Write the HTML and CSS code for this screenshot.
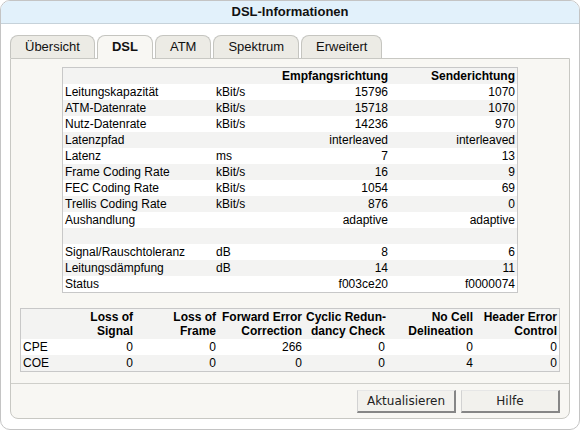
FILE: index.html
```html
<!DOCTYPE html>
<html lang="de">
<head>
    <meta charset="UTF-8">
    <title>DSL-Informationen</title>
    <link rel="stylesheet" href="styles.css">
</head>
<body>
    <div class="window">
        <div class="title">DSL-Informationen</div>
        <div class="window-body">
            <div class="tabs">
                <div class="tab">Übersicht</div>
                <div class="tab active">DSL</div>
                <div class="tab">ATM</div>
                <div class="tab">Spektrum</div>
                <div class="tab">Erweitert</div>
            </div>
            <div class="panel">
                <table class="dsl-table">
                    <colgroup>
                        <col class="col-name">
                        <col class="col-unit">
                        <col class="col-down">
                        <col class="col-up">
                    </colgroup>
                    <thead>
                        <tr><th></th><th></th><th class="num">Empfangsrichtung</th><th class="num">Senderichtung</th></tr>
                    </thead>
                    <tbody>
                        <tr><td>Leitungskapazität</td><td>kBit/s</td><td class="num">15796</td><td class="num">1070</td></tr>
                        <tr><td>ATM-Datenrate</td><td>kBit/s</td><td class="num">15718</td><td class="num">1070</td></tr>
                        <tr><td>Nutz-Datenrate</td><td>kBit/s</td><td class="num">14236</td><td class="num">970</td></tr>
                        <tr><td>Latenzpfad</td><td></td><td class="num">interleaved</td><td class="num">interleaved</td></tr>
                        <tr><td>Latenz</td><td>ms</td><td class="num">7</td><td class="num">13</td></tr>
                        <tr><td>Frame Coding Rate</td><td>kBit/s</td><td class="num">16</td><td class="num">9</td></tr>
                        <tr><td>FEC Coding Rate</td><td>kBit/s</td><td class="num">1054</td><td class="num">69</td></tr>
                        <tr><td>Trellis Coding Rate</td><td>kBit/s</td><td class="num">876</td><td class="num">0</td></tr>
                        <tr><td>Aushandlung</td><td></td><td class="num">adaptive</td><td class="num">adaptive</td></tr>
                        <tr><td></td><td></td><td></td><td></td></tr>
                        <tr><td>Signal/Rauschtoleranz</td><td>dB</td><td class="num">8</td><td class="num">6</td></tr>
                        <tr><td>Leitungsdämpfung</td><td>dB</td><td class="num">14</td><td class="num">11</td></tr>
                        <tr><td>Status</td><td></td><td class="num">f003ce20</td><td class="num">f0000074</td></tr>
                    </tbody>
                </table>

                <table class="error-table">
                    <colgroup>
                        <col class="col-side">
                        <col class="col-los">
                        <col class="col-lof">
                        <col class="col-fec">
                        <col class="col-crc">
                        <col class="col-ncd">
                        <col class="col-hec">
                    </colgroup>
                    <thead>
                        <tr>
                            <th></th>
                            <th class="num">Loss of<br>Signal</th>
                            <th class="num">Loss of<br>Frame</th>
                            <th class="num">Forward Error<br>Correction</th>
                            <th class="num">Cyclic Redun-<br>dancy Check</th>
                            <th class="num">No Cell<br>Delineation</th>
                            <th class="num">Header Error<br>Control</th>
                        </tr>
                    </thead>
                    <tbody>
                        <tr><td>CPE</td><td class="num">0</td><td class="num">0</td><td class="num">266</td><td class="num">0</td><td class="num">0</td><td class="num">0</td></tr>
                        <tr><td>COE</td><td class="num">0</td><td class="num">0</td><td class="num">0</td><td class="num">0</td><td class="num">4</td><td class="num">0</td></tr>
                    </tbody>
                </table>

                <div class="actions">
                    <button class="btn">Aktualisieren</button>
                    <button class="btn">Hilfe</button>
                </div>
            </div>
        </div>
    </div>
</body>
</html>
```

FILE: styles.css
```css
* {
    margin: 0;
    padding: 0;
    box-sizing: border-box;
}

html, body {
    width: 100%;
    height: 100%;
    background-color: #fff;
    overflow: hidden;
}

body {
    font-family: "Liberation Sans", Arial, sans-serif;
    font-size: 12px;
    color: #000;
}

.window {
    width: 580px;
    height: 430px;
    border: 1px solid #c4c4c4;
    border-radius: 10px;
    overflow: hidden;
    background: #fff;
}

.title {
    height: 23px;
    line-height: 22px;
    background: #e2f1fb;
    border-bottom: 1px solid #c6d2da;
    text-align: center;
    font-size: 13px;
    font-weight: bold;
    color: #111;
}

.window-body {
    padding: 11px 9px 0 9px;
}

.tabs {
    display: flex;
    align-items: flex-end;
    gap: 2px;
    height: 23px;
}

.tab {
    height: 23px;
    line-height: 22px;
    padding: 0 14px;
    font-size: 13px;
    color: #111;
    background: #ecebe5;
    border: 1px solid #c5c5c0;
    border-bottom: none;
    border-radius: 8px 8px 0 0;
}

.tab.active {
    height: 24px;
    margin-bottom: -1px;
    position: relative;
    z-index: 1;
    background: #f8f7f3;
    font-weight: bold;
}

.panel {
    background: #f8f7f3;
    border: 1px solid #c8c8c3;
    border-radius: 0 0 8px 8px;
    height: 361px;
}

table {
    border-spacing: 0;
    table-layout: fixed;
    background: #fff;
}

th, td {
    height: 16px;
    line-height: 16px;
    padding: 0 2px;
    white-space: nowrap;
    text-align: left;
    font-weight: normal;
}

th {
    font-weight: bold;
}

.num {
    text-align: right;
}

thead tr,
tbody tr:nth-child(even) {
    background: #f3f3f2;
}

.dsl-table {
    width: 456px;
    margin: 8px auto 0;
    border: 1px solid #c8c8c8;
}

.col-name { width: 151px; }
.col-unit { width: 66px; }
.col-down { width: 110px; }
.col-up   { width: 127px; }

.error-table {
    width: 540px;
    margin: 15px 9px 0;
    border: 1px solid #c8c8c8;
}

.col-side { width: 40px; }
.col-los  { width: 74px; }
.col-lof  { width: 83px; }
.col-fec  { width: 86px; }
.col-crc  { width: 83px; }
.col-ncd  { width: 88px; }
.col-hec  { width: 84px; }

.error-table th {
    height: 30px;
    line-height: 14px;
    padding-top: 1px;
    padding-bottom: 1px;
    vertical-align: bottom;
}

.actions {
    margin-top: 11px;
    border-top: 1px solid #cfcfca;
    padding: 6px 9px 0 0;
    display: flex;
    justify-content: flex-end;
    gap: 5px;
}

.btn {
    width: 99px;
    height: 23px;
    font-family: "DejaVu Sans", Verdana, sans-serif;
    font-size: 12px;
    color: #222;
    background: #f2f1ed;
    border-style: solid;
    border-width: 1px 2px 2px 1px;
    border-color: #e6e6e6 #868686 #868686 #d2d2d2;
    cursor: pointer;
}
```
